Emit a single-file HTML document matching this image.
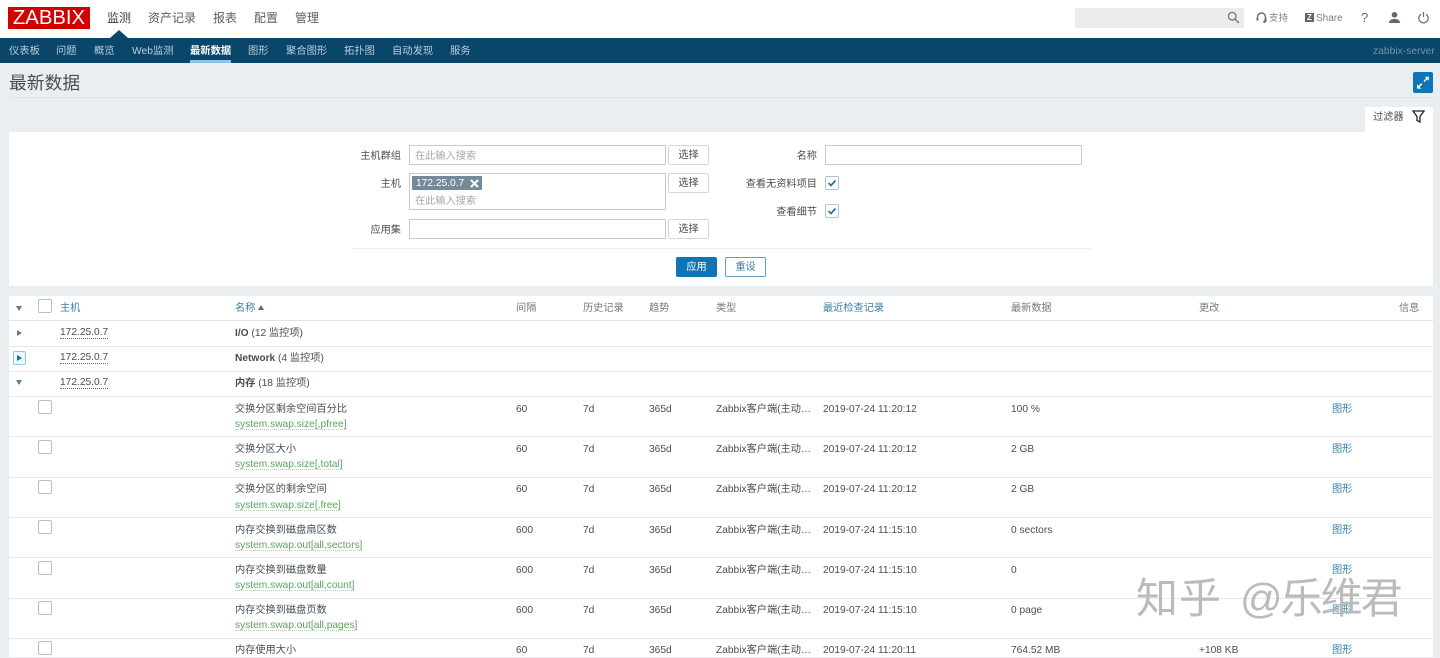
<!DOCTYPE html>
<html lang="zh"><head><meta charset="utf-8"><title>最新数据</title>
<style>
html,body{margin:0;padding:0}
body{width:1440px;height:657px;overflow:hidden;position:relative;background:#ebeef0;font:10.2px/14px "Liberation Sans","Noto Sans CJK SC",sans-serif;color:#1f2c33}
div,span,a{position:absolute;white-space:nowrap}
.m{font-size:12px;line-height:16px;top:10px;color:#5c5c5c}
.n{font-size:10.3px;top:45px;color:#b9cedb}
.lb{font-size:10.2px;color:#4d4d4d;text-align:right;margin-top:2px}
.in{background:#fff;border:1px solid #c5cbce;box-sizing:border-box}
.ph{color:#a3aaae;margin-top:2px}
.btn{background:#fff;border:1px solid #d3d8da;box-sizing:border-box;text-align:center;color:#4d4d4d;width:41px;height:20px;left:668px;line-height:20px;border-radius:2px}
.cb{width:14px;height:14px;border:1px solid #b9c0c4;box-sizing:border-box;background:#fff;border-radius:2px}
.th{top:302px;color:#737b7f}
.l{color:#3a82a6;margin-top:1.500px}
.th.l{margin-top:0}
.line{left:9px;width:1424px;height:1px;background:#e6e9eb}
.t{color:#474e52;margin-top:1.500px}
.g{color:#5ea35e;border-bottom:1px dotted #b4d4b4;line-height:9px;margin-top:3px}
.h{left:60px;border-bottom:1px dotted #666;line-height:10px;margin-top:2px;color:#474e52}
.wm{font-size:42px;line-height:50px;color:#b4b4b4;top:574px;opacity:.9}
</style></head><body>
<div style="left:0;top:0;width:1440px;height:38px;background:#fff"></div>
<div style="left:8px;top:7px;width:82px;height:22px;background:#d40000;color:#fff;font-size:20.300px;line-height:22px;text-align:center">ZABBIX</div>
<span class="m" style="left:107px;color:#3d3d3d">监测</span>
<span class="m" style="left:148px">资产记录</span>
<span class="m" style="left:213px">报表</span>
<span class="m" style="left:254px">配置</span>
<span class="m" style="left:295px">管理</span>
<div style="left:110px;top:30px;width:0;height:0;border:9px solid transparent;border-top:0;border-bottom:8px solid #0a466a"></div>

<div style="left:1075px;top:8px;width:169px;height:20px;background:#ececec"></div>
<svg style="position:absolute;left:1227px;top:11px" width="13" height="13" viewBox="0 0 13 13" fill="none" stroke="#777" stroke-width="1.3"><circle cx="5.2" cy="5.2" r="3.8"/><path d="M8 8l4 4"/></svg>
<svg style="position:absolute;left:1256px;top:12px" width="11" height="12" viewBox="0 0 11 12" fill="none" stroke="#666" stroke-width="1.4"><path d="M1.5 8V5a4 4 0 0 1 8 0v3"/><path d="M1.5 6.5v2M9.500 6.500v2.500l-2 1.500" stroke-width="2"/></svg>
<span style="left:1269px;top:11px;color:#808080;font-size:9.500px;margin-top:.5px">支持</span>
<div style="left:1305px;top:13px;width:9px;height:9px;background:#666;color:#fff;font:bold 8px/9px 'Liberation Sans',sans-serif;text-align:center">Z</div>
<span style="left:1316px;top:11px;color:#808080;font-size:10px;margin-top:.5px">Share</span>
<span style="left:1361px;top:10px;color:#666;font-size:13px;line-height:16px">?</span>
<svg style="position:absolute;left:1388px;top:11px" width="13" height="13" viewBox="0 0 13 13" fill="#5f6a70"><circle cx="6.500" cy="3.800" r="2.800"/><path d="M1 12c0-3 2.500-4 5.500-4s5.500 1 5.500 4z"/></svg>
<svg style="position:absolute;left:1417px;top:11px" width="13" height="13" viewBox="0 0 13 13" fill="none" stroke="#666" stroke-width="1.200"><path d="M4 3.200a4.700 4.700 0 1 0 5 0M6.500 1v5"/></svg>

<div style="left:0;top:38px;width:1440px;height:25px;background:#0a466a"></div>
<span class="n" style="left:9px">仪表板</span>
<span class="n" style="left:56px">问题</span>
<span class="n" style="left:94px">概览</span>
<span class="n" style="left:132px">Web监测</span>
<span class="n" style="left:190px;color:#fff;font-weight:bold">最新数据</span>
<div style="left:190px;top:60px;width:41px;height:3px;background:#8cc5e8"></div>
<span class="n" style="left:248px">图形</span>
<span class="n" style="left:286px">聚合图形</span>
<span class="n" style="left:344px">拓扑图</span>
<span class="n" style="left:392px">自动发现</span>
<span class="n" style="left:450px">服务</span>
<span class="n" style="left:1373px;color:#6f93a8">zabbix-server</span>

<span style="left:9px;top:71px;font-size:17.800px;line-height:24px;color:#474e52">最新数据</span>
<div style="left:9px;top:97px;width:1424px;height:1px;background:#e0e4e7"></div>
<div style="left:1413px;top:72px;width:20px;height:21px;background:#0f75b6;border-radius:2px"></div>
<svg style="position:absolute;left:1416px;top:75px" width="14" height="15" viewBox="0 0 14 15" fill="none" stroke="#fff" stroke-width="1.500"><path d="M8 6.500l4-4M1.800 12.700l4-4"/><path d="M8.800 1.800h4v4z M1 9.200v4.400h4.400z" fill="#fff" stroke="none"/></svg>

<div style="left:1365px;top:107px;width:68px;height:26px;background:#fff"></div>
<span style="left:1373px;top:112px;color:#4d4d4d;line-height:12px">过滤器</span>
<svg style="position:absolute;left:1412px;top:110px" width="13" height="13" viewBox="0 0 13 13" fill="none" stroke="#222" stroke-width="1.300"><path d="M1 1h11L8 6.500V12L5 10.500V6.500z"/></svg>

<div style="left:9px;top:132px;width:1424px;height:154px;background:#fff"></div>
<span class="lb" style="right:1039px;top:148px">主机群组</span>
<div class="in" style="left:409px;top:145px;width:257px;height:20px"></div>
<span class="ph" style="left:415px;top:148px">在此输入搜索</span>
<div class="btn" style="top:145px">选择</div>
<span class="lb" style="right:1039px;top:176px">主机</span>
<div class="in" style="left:409px;top:173px;width:257px;height:37px"></div>
<div style="left:412px;top:176px;width:70px;height:14px;background:#758a99;border-radius:1px;color:#fff;line-height:15px;text-indent:4px">172.25.0.7</div>
<svg style="position:absolute;left:470px;top:179px" width="9" height="9" viewBox="0 0 9 9" stroke="#fff" stroke-width="2"><path d="M1 1l7 7M8 1l-7 7"/></svg>
<span class="ph" style="left:415px;top:193px">在此输入搜索</span>
<div class="btn" style="top:173px">选择</div>
<span class="lb" style="right:1039px;top:222px">应用集</span>
<div class="in" style="left:409px;top:219px;width:257px;height:20px"></div>
<div class="btn" style="top:219px">选择</div>

<span class="lb" style="right:623px;top:148px">名称</span>
<div class="in" style="left:825px;top:145px;width:257px;height:20px"></div>
<span class="lb" style="right:623px;top:176px">查看无资料项目</span>
<div class="cb" style="left:825px;top:176px"></div>
<svg style="position:absolute;left:825px;top:176px" width="14" height="14" viewBox="0 0 14 14" fill="none" stroke="#23749c" stroke-width="1.700"><path d="M3.500 7l2.500 2.500L10.500 4.500"/></svg>
<span class="lb" style="right:623px;top:204px">查看细节</span>
<div class="cb" style="left:825px;top:204px"></div>
<svg style="position:absolute;left:825px;top:204px" width="14" height="14" viewBox="0 0 14 14" fill="none" stroke="#23749c" stroke-width="1.700"><path d="M3.500 7l2.500 2.500L10.500 4.500"/></svg>
<div style="left:352px;top:248px;width:740px;height:1px;background:#eef0f1"></div>
<div style="left:676px;top:257px;width:41px;height:20px;background:#0f75b6;color:#fff;text-align:center;line-height:21px;border-radius:2px">应用</div>
<div style="left:725px;top:257px;width:41px;height:20px;box-sizing:border-box;border:1px solid #6b9db8;background:#fff;color:#3a82a6;text-align:center;line-height:19px;border-radius:2px">重设</div>

<div style="left:9px;top:296px;width:1424px;height:361px;background:#fff"></div>
<div class="line" style="top:320px;background:#dfe3e5;height:1px"></div>
<div class="line" style="top:346px"></div>
<div class="line" style="top:371px"></div>
<div class="line" style="top:396px"></div>
<div class="line" style="top:436px"></div>
<div class="line" style="top:477px"></div>
<div class="line" style="top:517px"></div>
<div class="line" style="top:557px"></div>
<div class="line" style="top:598px"></div>
<div class="line" style="top:638px"></div>

<div style="left:16px;top:306px;width:0;height:0;border:3.500px solid transparent;border-top:5px solid #5d7c8f;border-bottom:0"></div>
<div class="cb" style="left:38px;top:299px"></div>
<span class="th l" style="left:60px">主机</span>
<span class="th l" style="left:235px">名称</span>
<div style="left:258px;top:305px;width:0;height:0;border:3.500px solid transparent;border-bottom:5px solid #5f6a70;border-top:0"></div>
<span class="th" style="left:516px">间隔</span>
<span class="th" style="left:583px">历史记录</span>
<span class="th" style="left:649px">趋势</span>
<span class="th" style="left:716px">类型</span>
<span class="th l" style="left:823px">最近检查记录</span>
<span class="th" style="left:1011px">最新数据</span>
<span class="th" style="left:1199px">更改</span>
<span class="th" style="left:1399px">信息</span>

<div style="left:17px;top:330px;width:0;height:0;border:3.500px solid transparent;border-left:5px solid #5d7c8f;border-right:0"></div>
<span class="h" style="top:326px">172.25.0.7</span>
<span class="t" style="left:235px;top:325px"><b>I/O</b> (12 监控项)</span>
<div style="left:13px;top:351px;width:13px;height:14px;box-sizing:border-box;border:1px solid #8cc5e8;border-radius:2px;background:#f2f8fc"></div>
<div style="left:17px;top:355px;width:0;height:0;border:3.500px solid transparent;border-left:5px solid #0f6fa8;border-right:0"></div>
<span class="h" style="top:351px">172.25.0.7</span>
<span class="t" style="left:235px;top:350px"><b>Network</b> (4 监控项)</span>
<div style="left:16px;top:380px;width:0;height:0;border:3.500px solid transparent;border-top:5px solid #5d7c8f;border-bottom:0"></div>
<span class="h" style="top:376px">172.25.0.7</span>
<span class="t" style="left:235px;top:375px"><b>内存</b> (18 监控项)</span>

<div class="cb" style="left:38px;top:400px"></div>
<span class="t" style="left:235px;top:401px">交换分区剩余空间百分比</span><span class="g" style="left:235px;top:417px">system.swap.size[,pfree]</span>
<span class="t" style="left:516px;top:401px">60</span><span class="t" style="left:583px;top:401px">7d</span><span class="t" style="left:649px;top:401px">365d</span><span class="t" style="left:716px;top:401px">Zabbix客户端(主动…</span><span class="t" style="left:823px;top:401px">2019-07-24 11:20:12</span><span class="t" style="left:1011px;top:401px">100 %</span><span class="l" style="left:1332px;top:401px">图形</span>

<div class="cb" style="left:38px;top:440px"></div>
<span class="t" style="left:235px;top:441px">交换分区大小</span><span class="g" style="left:235px;top:457px">system.swap.size[,total]</span>
<span class="t" style="left:516px;top:441px">60</span><span class="t" style="left:583px;top:441px">7d</span><span class="t" style="left:649px;top:441px">365d</span><span class="t" style="left:716px;top:441px">Zabbix客户端(主动…</span><span class="t" style="left:823px;top:441px">2019-07-24 11:20:12</span><span class="t" style="left:1011px;top:441px">2 GB</span><span class="l" style="left:1332px;top:441px">图形</span>

<div class="cb" style="left:38px;top:480px"></div>
<span class="t" style="left:235px;top:481px">交换分区的剩余空间</span><span class="g" style="left:235px;top:498px">system.swap.size[,free]</span>
<span class="t" style="left:516px;top:481px">60</span><span class="t" style="left:583px;top:481px">7d</span><span class="t" style="left:649px;top:481px">365d</span><span class="t" style="left:716px;top:481px">Zabbix客户端(主动…</span><span class="t" style="left:823px;top:481px">2019-07-24 11:20:12</span><span class="t" style="left:1011px;top:481px">2 GB</span><span class="l" style="left:1332px;top:481px">图形</span>

<div class="cb" style="left:38px;top:520px"></div>
<span class="t" style="left:235px;top:522px">内存交换到磁盘扇区数</span><span class="g" style="left:235px;top:538px">system.swap.out[all,sectors]</span>
<span class="t" style="left:516px;top:522px">600</span><span class="t" style="left:583px;top:522px">7d</span><span class="t" style="left:649px;top:522px">365d</span><span class="t" style="left:716px;top:522px">Zabbix客户端(主动…</span><span class="t" style="left:823px;top:522px">2019-07-24 11:15:10</span><span class="t" style="left:1011px;top:522px">0 sectors</span><span class="l" style="left:1332px;top:522px">图形</span>

<div class="cb" style="left:38px;top:561px"></div>
<span class="t" style="left:235px;top:562px">内存交换到磁盘数量</span><span class="g" style="left:235px;top:578px">system.swap.out[all,count]</span>
<span class="t" style="left:516px;top:562px">600</span><span class="t" style="left:583px;top:562px">7d</span><span class="t" style="left:649px;top:562px">365d</span><span class="t" style="left:716px;top:562px">Zabbix客户端(主动…</span><span class="t" style="left:823px;top:562px">2019-07-24 11:15:10</span><span class="t" style="left:1011px;top:562px">0</span><span class="l" style="left:1332px;top:562px">图形</span>

<div class="cb" style="left:38px;top:601px"></div>
<span class="t" style="left:235px;top:602px">内存交换到磁盘页数</span><span class="g" style="left:235px;top:618px">system.swap.out[all,pages]</span>
<span class="t" style="left:516px;top:602px">600</span><span class="t" style="left:583px;top:602px">7d</span><span class="t" style="left:649px;top:602px">365d</span><span class="t" style="left:716px;top:602px">Zabbix客户端(主动…</span><span class="t" style="left:823px;top:602px">2019-07-24 11:15:10</span><span class="t" style="left:1011px;top:602px">0 page</span><span class="l" style="left:1332px;top:602px">图形</span>

<div class="cb" style="left:38px;top:641px"></div>
<span class="t" style="left:235px;top:642px">内存使用大小</span>
<span class="t" style="left:516px;top:642px">60</span><span class="t" style="left:583px;top:642px">7d</span><span class="t" style="left:649px;top:642px">365d</span><span class="t" style="left:716px;top:642px">Zabbix客户端(主动…</span><span class="t" style="left:823px;top:642px">2019-07-24 11:20:11</span><span class="t" style="left:1011px;top:642px">764.52 MB</span><span class="t" style="left:1199px;top:642px">+108 KB</span><span class="l" style="left:1332px;top:642px">图形</span>

<span class="wm" style="left:1136px;letter-spacing:1px">知乎</span>
<span class="wm" style="left:1240px;letter-spacing:-2px">@乐维君</span>
</body></html>
